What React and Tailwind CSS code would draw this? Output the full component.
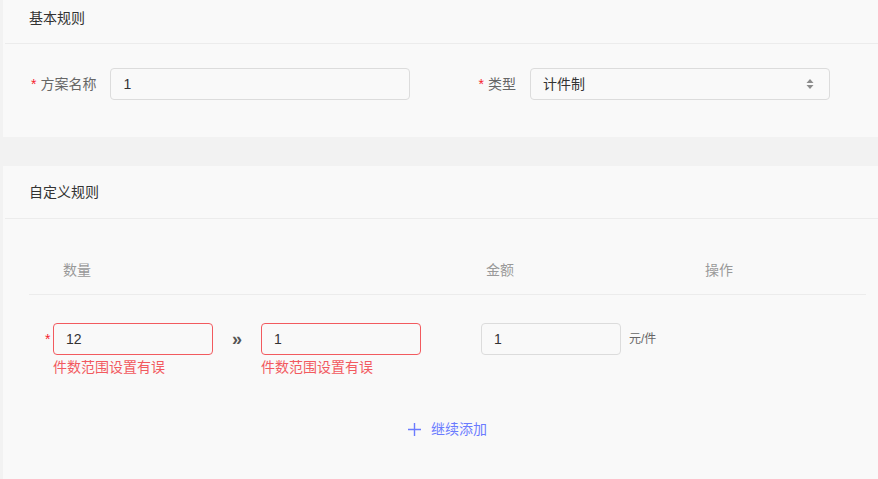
import React, { useState } from 'react';

const Star = ({ className = '' }) => (
    <span className={`text-[#f5222d] mr-[4px] ${className}`}>*</span>
);

const SelectArrows = () => (
    <svg width="8" height="12" viewBox="0 0 8 12" className="text-[#8c8c8c]">
        <path d="M4 1 L7.5 5 L0.5 5 Z" fill="currentColor" />
        <path d="M4 11 L7.5 7 L0.5 7 Z" fill="currentColor" />
    </svg>
);

const App = () => {
    const [name, setName] = useState('1');
    const [from, setFrom] = useState('12');
    const [to, setTo] = useState('1');
    const [price, setPrice] = useState('1');

    const inputBase = 'h-[32px] rounded-[4px] border bg-transparent px-3 text-[14px] text-[#333] outline-none';

    return (
        <div
            className="w-full h-[479px] bg-[#f2f2f2] pl-[3px] flex flex-col text-[14px] overflow-hidden"
            style={{ fontFamily: '"Liberation Sans", "Noto Sans CJK SC", sans-serif' }}
        >
            {/* --- 基本规则 --- */}
            <section className="h-[137px] bg-[#f9f9f9] shrink-0">
                <div className="h-[44px] ml-[2px] pl-[24px] pt-[8px] leading-[20px] text-[#333] border-b border-[#ececec]">
                    基本规则
                </div>
                <div className="flex items-center mt-[24px]">
                    <div className="flex items-center pl-[28px]">
                        <Star />
                        <span className="text-[#666] w-[70px]">方案名称</span>
                        <input
                            value={name}
                            onChange={(e) => setName(e.target.value)}
                            className={`${inputBase} w-[300px] border-[#dcdcdc]`}
                        />
                    </div>
                    <div className="flex items-center ml-[68px]">
                        <Star />
                        <span className="text-[#666] w-[42px]">类型</span>
                        <div className={`${inputBase} w-[300px] border-[#dcdcdc] flex items-center justify-between pr-[15px]`}>
                            <span>计件制</span>
                            <SelectArrows />
                        </div>
                    </div>
                </div>
            </section>

            {/* --- 自定义规则 --- */}
            <section className="flex-1 bg-[#f9f9f9] mt-[29px]">
                <div className="h-[53px] ml-[2px] pl-[24px] pt-[16px] leading-[20px] text-[#333] border-b border-[#ececec]">
                    自定义规则
                </div>
                <div className="ml-[26px] mr-[12px] pt-[40px]">
                    <div className="flex leading-[22px] pb-[13px] border-b border-[#ececec] text-[#999]">
                        <span className="ml-[34px] w-[423px]">数量</span>
                        <span className="w-[219px]">金额</span>
                        <span>操作</span>
                    </div>

                    <div className="flex items-start mt-[28px]">
                        <div className="flex flex-col">
                            <div className="flex items-center">
                                <span className="text-[#f5222d] w-[24px] pl-[16px]">*</span>
                                <input
                                    value={from}
                                    onChange={(e) => setFrom(e.target.value)}
                                    className={`${inputBase} w-[160px] border-[#f25a5f]`}
                                />
                            </div>
                            <span className="ml-[24px] mt-[2px] leading-[20px] text-[#f25a5f]">件数范围设置有误</span>
                        </div>
                        <span className="w-[48px] h-[32px] flex items-center justify-center text-[#555] text-[18px] font-semibold">»</span>
                        <div className="flex flex-col">
                            <input
                                value={to}
                                onChange={(e) => setTo(e.target.value)}
                                className={`${inputBase} w-[160px] border-[#f25a5f]`}
                            />
                            <span className="mt-[2px] leading-[20px] text-[#f25a5f]">件数范围设置有误</span>
                        </div>
                        <div className="flex items-center ml-[60px] h-[32px]">
                            <input
                                value={price}
                                onChange={(e) => setPrice(e.target.value)}
                                className={`${inputBase} w-[140px] border-[#dcdcdc]`}
                            />
                            <span className="ml-[8px] text-[12px] text-[#666]">元/件</span>
                        </div>
                    </div>

                    <div className="flex justify-center mt-[42px]">
                        <button className="flex items-center gap-[10px] text-[#6b7bff] leading-[20px]">
                            <svg width="13" height="13" viewBox="0 0 13 13">
                                <path d="M6.5 0 V13 M0 6.5 H13" stroke="currentColor" strokeWidth="1.4" />
                            </svg>
                            继续添加
                        </button>
                    </div>
                </div>
            </section>
        </div>
    );
};

export default App;
